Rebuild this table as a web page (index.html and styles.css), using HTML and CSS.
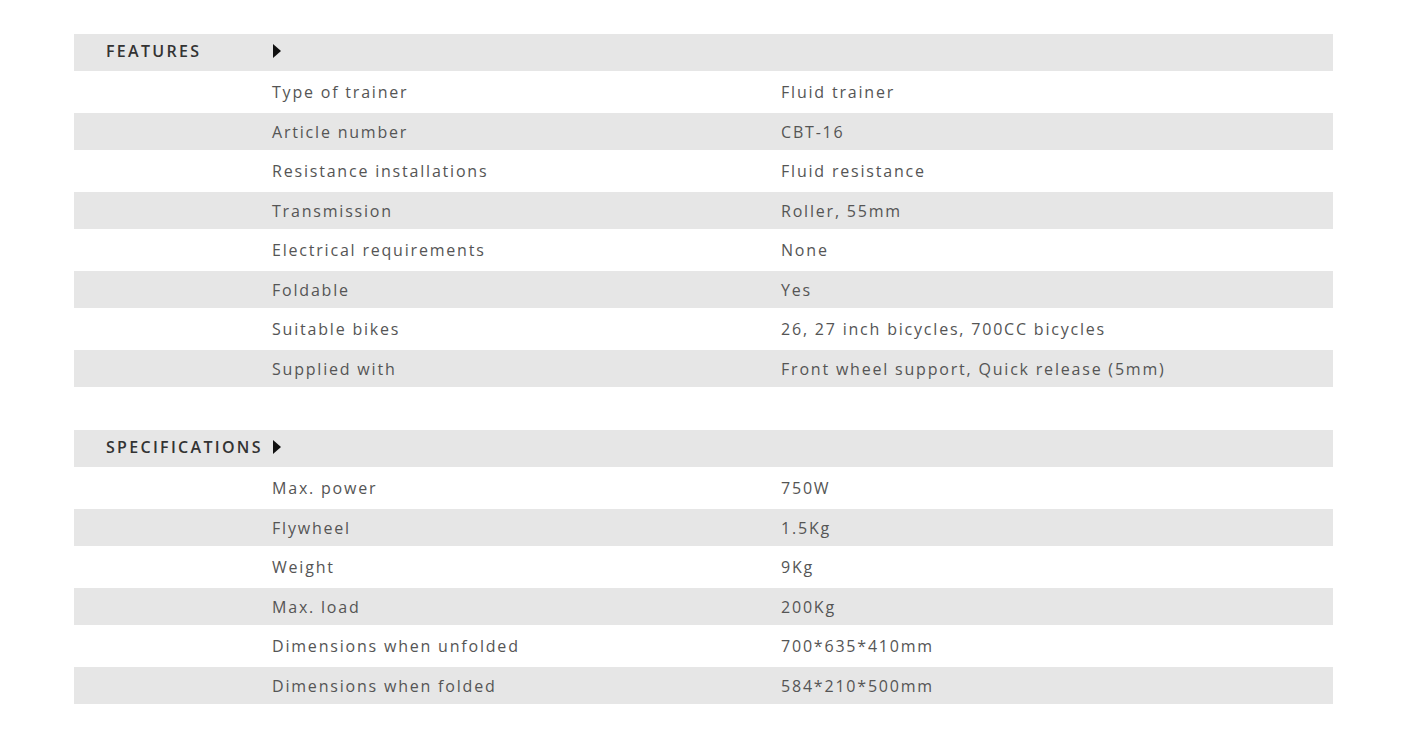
FILE: index.html
```html
<!DOCTYPE html>
<html lang="en">
<head>
<meta charset="utf-8">
<title>Trainer specifications</title>
<link rel="stylesheet" href="styles.css">
</head>
<body>
<main class="page">
  <section class="spec">
    <div class="row head">
      <div class="title">FEATURES</div>
      <div class="arrow"></div>
    </div>
    <div class="row"><div class="label">Type of trainer</div><div class="value">Fluid trainer</div></div>
    <div class="row alt"><div class="label">Article number</div><div class="value">CBT-16</div></div>
    <div class="row"><div class="label">Resistance installations</div><div class="value">Fluid resistance</div></div>
    <div class="row alt"><div class="label">Transmission</div><div class="value">Roller, 55mm</div></div>
    <div class="row"><div class="label">Electrical requirements</div><div class="value">None</div></div>
    <div class="row alt"><div class="label">Foldable</div><div class="value">Yes</div></div>
    <div class="row"><div class="label">Suitable bikes</div><div class="value">26, 27 inch bicycles, 700CC bicycles</div></div>
    <div class="row alt"><div class="label">Supplied with</div><div class="value">Front wheel support, Quick release (5mm)</div></div>
  </section>
  <section class="spec">
    <div class="row head">
      <div class="title">SPECIFICATIONS</div>
      <div class="arrow"></div>
    </div>
    <div class="row"><div class="label">Max. power</div><div class="value">750W</div></div>
    <div class="row alt"><div class="label">Flywheel</div><div class="value">1.5Kg</div></div>
    <div class="row"><div class="label">Weight</div><div class="value">9Kg</div></div>
    <div class="row alt"><div class="label">Max. load</div><div class="value">200Kg</div></div>
    <div class="row"><div class="label">Dimensions when unfolded</div><div class="value">700*635*410mm</div></div>
    <div class="row alt last"><div class="label">Dimensions when folded</div><div class="value">584*210*500mm</div></div>
  </section>
</main>
</body>
</html>
```
FILE: styles.css
```css
html, body {
  margin: 0;
  padding: 0;
  background: #fff;
}
body {
  font-family: "Open Sans", "Noto Sans", sans-serif;
  color: #555;
}
.page {
  width: 1259px;
  margin-left: 74px;
  padding-top: 34px;
  display: flex;
  flex-direction: column;
  gap: 43px;
}
.spec {
  display: flex;
  flex-direction: column;
}
.row {
  display: grid;
  grid-template-columns: 198px 509px 1fr;
  align-items: center;
  height: 42px;
  font-size: 16px;
  letter-spacing: 1.8px;
}
.row .label { grid-column: 2; }
.row .value { grid-column: 3; }
.row.alt, .row.head {
  height: 37px;
  background: #e6e6e6;
}
.head .title {
  grid-column: 1;
  padding-left: 32px;
  padding-bottom: 3px;
  font-size: 16px;
  font-weight: 600;
  color: #333;
  letter-spacing: 2.3px;
  white-space: nowrap;
}
.head .arrow {
  grid-column: 2;
  width: 0;
  height: 0;
  margin-left: 1px;
  margin-bottom: 3px;
  border-top: 7px solid transparent;
  border-bottom: 7px solid transparent;
  border-left: 8px solid #111;
}
```
